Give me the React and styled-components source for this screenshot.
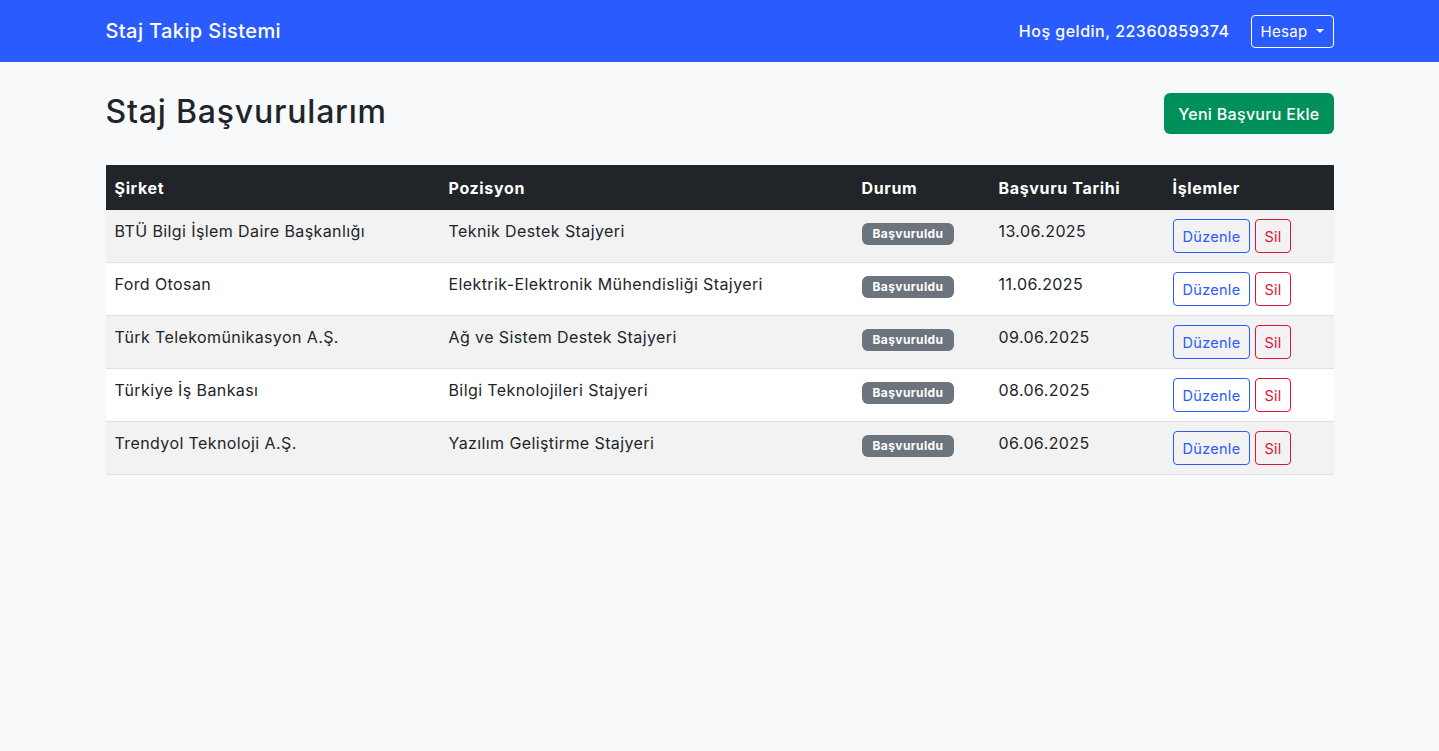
import React from "react";
import styled, { createGlobalStyle } from "styled-components";

const Global = createGlobalStyle`
  * { box-sizing: border-box; }
  html, body { margin: 0; padding: 0; }
  body {
    background: #f8f9fa;
    font-family: Inter, "Noto Sans", "Liberation Sans", sans-serif;
    color: #212529;
    font-size: 16px;
    line-height: 1.5;
    letter-spacing: 0.4px;
  }
`;

const Nav = styled.nav`
  background: #2a5bff;
  height: 62px;
`;

const Container = styled.div`
  max-width: 1228px;
  margin: 0 auto;
`;

const NavInner = styled(Container)`
  height: 100%;
  display: flex;
  align-items: center;
  justify-content: space-between;
`;

const Brand = styled.a`
  color: #fff;
  font-size: 20px;
  font-weight: 500;
  text-decoration: none;
  letter-spacing: 0.4px;
`;

const NavRight = styled.div`
  display: flex;
  align-items: center;
  gap: 21px;
`;

const Welcome = styled.span`
  color: #fff;
  font-size: 16px;
  font-weight: 500;
  letter-spacing: 0.5px;
`;

const AccountBtn = styled.button`
  height: 33px;
  padding: 0 9px;
  border: 1px solid #fff;
  border-radius: 4px;
  background: transparent;
  color: #fff;
  font-family: inherit;
  font-size: 15px;
  letter-spacing: 0.3px;
  display: flex;
  align-items: center;
  gap: 8px;
  &::after {
    content: "";
    border-top: 4.5px solid #fff;
    border-left: 4.5px solid transparent;
    border-right: 4.5px solid transparent;
  }
`;

const Main = styled(Container)`
  padding-top: 31px;
`;

const Header = styled.div`
  display: flex;
  justify-content: space-between;
  align-items: flex-start;
  margin-bottom: 31px;
`;

const Title = styled.h1`
  margin: 0;
  font-size: 32px;
  font-weight: 500;
  line-height: 1.2;
  letter-spacing: 0.8px;
`;

const AddBtn = styled.button`
  height: 41px;
  padding: 0 14px;
  border: none;
  border-radius: 6px;
  background: #00915a;
  color: #fff;
  font-family: inherit;
  font-size: 16px;
  font-weight: 500;
  letter-spacing: 0.3px;
`;

const Table = styled.table`
  width: 100%;
  border-collapse: collapse;
`;

const Th = styled.th`
  background: #212529;
  color: #fff;
  text-align: left;
  font-weight: 700;
  letter-spacing: 0.65px;
  height: 45px;
  padding: 0 9px;
  width: ${(p) => p.$w}px;
`;

const Tr = styled.tr`
  background: ${(p) => (p.$odd ? "#f2f2f2" : "#fff")};
  border-bottom: 1px solid #dee2e6;
`;

const Td = styled.td`
  padding: 9px 9px;
  height: 52px;
  vertical-align: top;
  font-size: 16px;
`;

const Badge = styled.span`
  display: inline-block;
  margin-top: 4px;
  background: #6c757d;
  color: #fff;
  font-size: 12px;
  font-weight: 700;
  letter-spacing: 0.4px;
  padding: 0 11px;
  line-height: 22px;
  height: 22px;
  border-radius: 6px;
`;

const Actions = styled.div`
  display: flex;
  gap: 5px;
`;

const OutlineBtn = styled.button`
  height: 34px;
  padding: 0 ${(p) => p.$px}px;
  border: 1px solid ${(p) => p.$c};
  color: ${(p) => p.$c};
  background: transparent;
  border-radius: 4px;
  font-family: inherit;
  font-size: 14.5px;
  letter-spacing: 0.3px;
`;

const rows = [
  ["BTÜ Bilgi İşlem Daire Başkanlığı", "Teknik Destek Stajyeri", "13.06.2025"],
  ["Ford Otosan", "Elektrik-Elektronik Mühendisliği Stajyeri", "11.06.2025"],
  ["Türk Telekomünikasyon A.Ş.", "Ağ ve Sistem Destek Stajyeri", "09.06.2025"],
  ["Türkiye İş Bankası", "Bilgi Teknolojileri Stajyeri", "08.06.2025"],
  ["Trendyol Teknoloji A.Ş.", "Yazılım Geliştirme Stajyeri", "06.06.2025"],
];

export default function App() {
  return (
    <>
      <Global />
      <Nav>
        <NavInner>
          <Brand href="#">Staj Takip Sistemi</Brand>
          <NavRight>
            <Welcome>Hoş geldin, 22360859374</Welcome>
            <AccountBtn>Hesap</AccountBtn>
          </NavRight>
        </NavInner>
      </Nav>
      <Main>
        <Header>
          <Title>Staj Başvurularım</Title>
          <AddBtn>Yeni Başvuru Ekle</AddBtn>
        </Header>
        <Table>
          <thead>
            <tr>
              <Th $w={334}>Şirket</Th>
              <Th $w={413}>Pozisyon</Th>
              <Th $w={137}>Durum</Th>
              <Th $w={174}>Başvuru Tarihi</Th>
              <Th>İşlemler</Th>
            </tr>
          </thead>
          <tbody>
            {rows.map((r, i) => (
              <Tr key={i} $odd={i % 2 === 0}>
                <Td>{r[0]}</Td>
                <Td>{r[1]}</Td>
                <Td>
                  <Badge>Başvuruldu</Badge>
                </Td>
                <Td>{r[2]}</Td>
                <Td>
                  <Actions>
                    <OutlineBtn $c="#2a5bff" $px={9}>Düzenle</OutlineBtn>
                    <OutlineBtn $c="#dc143c" $px={8}>Sil</OutlineBtn>
                  </Actions>
                </Td>
              </Tr>
            ))}
          </tbody>
        </Table>
      </Main>
    </>
  );
}
